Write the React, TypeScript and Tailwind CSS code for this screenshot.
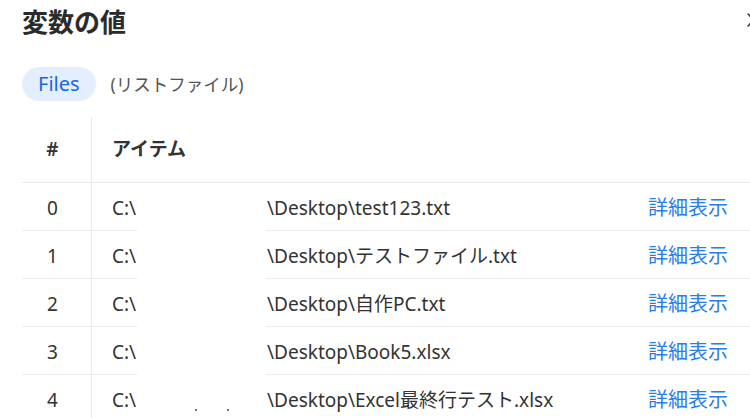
import { X } from "lucide-react";

const FILES = [
  "test123.txt",
  "テストファイル.txt",
  "自作PC.txt",
  "Book5.xlsx",
  "Excel最終行テスト.xlsx",
];

export default function App() {
  return (
    <div
      className="relative w-[750px] h-[418px] overflow-hidden bg-white text-[#333]"
      style={{ fontFamily: '"Noto Sans", "Noto Sans CJK JP", sans-serif' }}
    >
      <div className="flex items-center justify-between pl-[22px] pt-[4px] h-[40px]">
        <h1 className="text-[26px] font-bold leading-[34px] text-[#2b2b2b]">変数の値</h1>
      </div>
      <X className="absolute left-[742px] top-[8px] w-[24px] h-[24px] text-[#444]" strokeWidth={1.6} />

      <div className="flex items-center gap-[15px] pl-[22px] mt-[27px]">
        <span className="h-[34px] px-[16px] rounded-full bg-[#e3eefe] text-[#1668e3] text-[20px] leading-[34px]">
          Files
        </span>
        <span className="text-[17.5px] text-[#555]">(リストファイル)</span>
      </div>

      {/* table */}
      <div className="ml-[22px] mt-[16px]">
        <div className="flex h-[66px] items-center border-b border-[#e9e9e9]">
          <div className="w-[69px] pr-[8px] text-center text-[19px] font-semibold h-full flex items-center justify-center">
            #
          </div>
          <div className="h-full border-l border-[#e9e9e9] pl-[20px] flex items-center text-[19px] font-semibold">
            アイテム
          </div>
        </div>
        {FILES.map((f, i) => (
          <div key={i} className="flex h-[48px] items-center border-b border-[#ececec]">
            <div className="w-[69px] pr-[8px] pt-[3px] text-center text-[19px]">{i}</div>
            <div className="flex flex-1 h-full items-center border-l border-[#e9e9e9] pl-[20px] pt-[3px] text-[19px]">
              <span className="w-[155px] shrink-0">C:\</span>
              <span className="flex-1 whitespace-nowrap">\Desktop\{f}</span>
              <a className="text-[#2b7ce6] pr-[22px] text-[20px] cursor-pointer">詳細表示</a>
            </div>
          </div>
        ))}
      </div>

      {/* redacted username */}
      <div className="absolute left-[137px] top-[188px] w-[129px] h-[230px] bg-white">
        <span className="absolute left-[58px] top-[221px] w-[2px] h-[2px] bg-[#777]" />
        <span className="absolute left-[90px] top-[221px] w-[2px] h-[2px] bg-[#777]" />
      </div>
    </div>
  );
}
